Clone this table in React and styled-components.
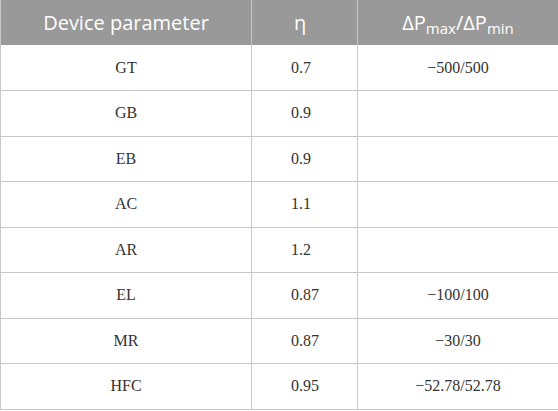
import React from "react";
import styled, { createGlobalStyle } from "styled-components";

const Global = createGlobalStyle`
  html, body { margin: 0; padding: 0; background: #ffffff; }
  #root { width: 558px; }
`;

const Table = styled.table`
  width: 558px;
  border-collapse: collapse;
  table-layout: fixed;
`;

const HeadCell = styled.th`
  height: 45px;
  padding: 0;
  padding-left: ${(p) => (p.$align === "left" ? "42px" : "0")};
  background: #999999;
  color: #ffffff;
  font-family: "Open Sans", "Noto Sans", sans-serif;
  font-weight: 400;
  font-size: 20px;
  text-align: ${(p) => p.$align || "center"};
  border-left: 1px solid #c8c8c8;
  border-right: 1px solid #c8c8c8;
  white-space: nowrap;
  sub {
    font-size: 15px;
    vertical-align: -4px;
    line-height: 0;
  }
`;

const Row = styled.tr`
  height: 45.5px;
`;

const Cell = styled.td`
  padding: 0;
  padding-left: ${(p) => (p.$align === "left" ? "39px" : "0")};
  font-family: "Liberation Serif", "DejaVu Serif", serif;
  font-size: 16px;
  color: #333333;
  text-align: ${(p) => p.$align || "center"};
  border: 1px solid #c8c8c8;
  border-top: none;
`;

const rows = [
  ["GT", "0.7", "\u2212500/500"],
  ["GB", "0.9", ""],
  ["EB", "0.9", ""],
  ["AC", "1.1", ""],
  ["AR", "1.2", ""],
  ["EL", "0.87", "\u2212100/100"],
  ["MR", "0.87", "\u221230/30"],
  ["HFC", "0.95", "\u221252.78/52.78"],
];

export default function App() {
  return (
    <>
      <Global />
      <Table>
        <colgroup>
          <col style={{ width: "251px" }} />
          <col style={{ width: "106px" }} />
          <col style={{ width: "201px" }} />
        </colgroup>
        <thead>
          <tr>
            <HeadCell>Device parameter</HeadCell>
            <HeadCell $align="left">η</HeadCell>
            <HeadCell>
              ΔP<sub>max</sub>/ΔP<sub>min</sub>
            </HeadCell>
          </tr>
        </thead>
        <tbody>
          {rows.map((r) => (
            <Row key={r[0]}>
              <Cell>{r[0]}</Cell>
              <Cell $align="left">{r[1]}</Cell>
              <Cell>{r[2]}</Cell>
            </Row>
          ))}
        </tbody>
      </Table>
    </>
  );
}
